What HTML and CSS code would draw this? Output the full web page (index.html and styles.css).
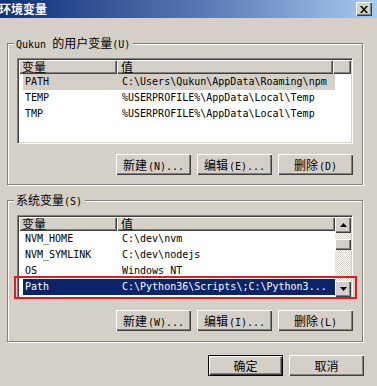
FILE: index.html
```html
<!DOCTYPE html>
<html lang="zh-CN">
<head>
  <meta charset="UTF-8">
  <title>环境变量</title>
  <link rel="stylesheet" href="styles.css">
</head>
<body>
  <div class="window">
    <div class="titlebar">
      <span class="title">环境变量</span>
      <span class="close">
        <svg width="8" height="7" viewBox="0 0 8 7"><path d="M0 0h2l2 2.5 2-2.5h2l-3 3.5 3 3.5h-2l-2-2.5-2 2.5h-2l3-3.5z" fill="#000"/></svg>
      </span>
    </div>

    <div class="content">
      <div class="group">
        <div class="legend"><span class="mono">Qukun </span>的用户变量<span class="mono">(U)</span></div>
        <div class="listview user-list">
          <div class="header">
            <div class="col name">变量</div>
            <div class="col value">值</div>
            <div class="col filler"></div>
          </div>
          <div class="row inactive"><span class="c1 mono">PATH</span><span class="c2 mono">C:\Users\Qukun\AppData\Roaming\npm</span></div>
          <div class="row"><span class="c1 mono">TEMP</span><span class="c2 mono">%USERPROFILE%\AppData\Local\Temp</span></div>
          <div class="row"><span class="c1 mono">TMP</span><span class="c2 mono">%USERPROFILE%\AppData\Local\Temp</span></div>
        </div>
        <div class="buttons">
          <button class="btn">新建<span class="mono">(N)...</span></button>
          <button class="btn">编辑<span class="mono">(E)...</span></button>
          <button class="btn">删除<span class="mono">(D)</span></button>
        </div>
      </div>

      <div class="group system">
        <div class="legend">系统变量<span class="mono">(S)</span></div>
        <div class="listview sys-list">
          <div class="list-main">
            <div class="header">
              <div class="col name">变量</div>
              <div class="col value">值</div>
            </div>
            <div class="row"><span class="c1 mono">NVM_HOME</span><span class="c2 mono">C:\dev\nvm</span></div>
            <div class="row"><span class="c1 mono">NVM_SYMLINK</span><span class="c2 mono">C:\dev\nodejs</span></div>
            <div class="row"><span class="c1 mono">OS</span><span class="c2 mono">Windows NT</span></div>
            <div class="row selected"><span class="c1 mono">Path</span><span class="c2 mono">C:\Python36\Scripts\;C:\Python3...</span></div>
          </div>
          <div class="scrollbar">
            <div class="sb-btn">
              <svg width="7" height="4" viewBox="0 0 7 4"><path d="M3.5 0L7 4H0z" fill="#000"/></svg>
            </div>
            <div class="sb-track">
              <div class="sb-thumb"></div>
            </div>
            <div class="sb-btn">
              <svg width="7" height="4" viewBox="0 0 7 4"><path d="M0 0h7L3.5 4z" fill="#000"/></svg>
            </div>
          </div>
        </div>
        <div class="highlight-box"></div>
        <div class="buttons">
          <button class="btn">新建<span class="mono">(W)...</span></button>
          <button class="btn">编辑<span class="mono">(I)...</span></button>
          <button class="btn">删除<span class="mono">(L)</span></button>
        </div>
      </div>

      <div class="dialog-buttons">
        <button class="btn default">确定</button>
        <button class="btn">取消</button>
      </div>
    </div>
  </div>
</body>
</html>
```

FILE: styles.css
```css
body {
  margin: 0;
  background: #d4d0c8;
  font-family: "Noto Sans CJK SC", sans-serif;
  font-size: 12px;
  color: #000;
  overflow: hidden;
}

.window {
  width: 377px;
  height: 386px;
  background: #d4d0c8;
}

.mono {
  font-family: "DejaVu Sans Mono", "Liberation Mono", monospace;
  font-size: 10px;
}

/* title bar */
.titlebar {
  height: 18px;
  display: flex;
  align-items: center;
  justify-content: space-between;
  background: linear-gradient(to right, #10307a, #5a7ab4 55%, #a6caf0);
  padding-right: 5px;
}

.title {
  color: #fff;
  font-weight: bold;
  font-size: 12px;
  line-height: 18px;
  margin-left: -1px;
}

.close {
  width: 16px;
  height: 14px;
  box-sizing: border-box;
  background: #d4d0c8;
  display: flex;
  align-items: center;
  justify-content: center;
  box-shadow: inset 1px 1px #fff, inset -1px -1px #404040, inset -2px -2px #808080;
}

.content {
  padding: 25px 13px 0 7px;
}

/* group boxes */
.group {
  position: relative;
  width: 356px;
  box-sizing: border-box;
  border: 1px solid #808080;
  box-shadow: inset 1px 1px #fff, 1px 1px #fff;
  padding: 14px 9px 9px 9px;
}

.group.system {
  margin-top: 15px;
  padding-bottom: 10px;
}

.legend {
  position: absolute;
  top: -8px;
  left: 6px;
  padding: 0 3px 0 2px;
  background: #d4d0c8;
  line-height: 14px;
}

/* list views */
.listview {
  background: #fff;
  border: 1px solid;
  border-color: #808080 #fff #fff #808080;
  box-shadow: inset 1px 1px #404040, inset -1px -1px #d4d0c8;
  padding: 1px;
  box-sizing: border-box;
  width: 336px;
}

.user-list {
  height: 86px;
}

.sys-list {
  height: 84px;
  display: flex;
}

.list-main {
  flex: 1;
}

.header {
  display: flex;
  height: 14px;
  background: #d4d0c8;
}

.col {
  box-sizing: border-box;
  height: 14px;
  line-height: 13px;
  padding-left: 3px;
  box-shadow: inset 1px 1px #fff, inset -1px -1px #404040, inset -2px -2px #808080;
}

.col.name {
  width: 98px;
}

.col.value {
  width: 216px;
  padding-left: 4px;
}

.col.filler {
  flex: 1;
}

.sys-list .col.value {
  flex: 1;
}

.row {
  display: flex;
  height: 16px;
  line-height: 16px;
  margin-left: 4px;
  width: 312px;
}

.row.inactive {
  background: #d4d0c8;
}

.row.selected {
  background: #0a246a;
  color: #fff;
}

.c1 {
  width: 95px;
  padding-left: 2px;
  box-sizing: border-box;
}

.c2 {
  padding-left: 4px;
  white-space: nowrap;
}

/* scrollbar */
.scrollbar {
  width: 16px;
  display: flex;
  flex-direction: column;
}

.sb-btn {
  height: 16px;
  background: #d4d0c8;
  box-sizing: border-box;
  display: flex;
  align-items: center;
  justify-content: center;
  box-shadow: inset 1px 1px #fff, inset -1px -1px #404040, inset -2px -2px #808080;
}

.sb-track {
  flex: 1;
  background: repeating-conic-gradient(#fff 0 25%, #d4d0c8 0 50%) 0 0 / 2px 2px;
  padding-top: 6px;
}

.sb-thumb {
  height: 11px;
  background: #d4d0c8;
  box-shadow: inset 1px 1px #fff, inset -1px -1px #404040, inset -2px -2px #808080;
}

.highlight-box {
  position: absolute;
  left: 6px;
  top: 75px;
  width: 343px;
  height: 23px;
  box-sizing: border-box;
  border: 2px solid #e81820;
}

/* buttons */
.buttons {
  display: flex;
  justify-content: flex-end;
  gap: 6px;
  margin-top: 10px;
}

.group.system .buttons {
  margin-top: 11px;
}

.btn {
  width: 75px;
  height: 21px;
  padding: 0;
  border: none;
  background: #d4d0c8;
  font-family: "Noto Sans CJK SC", sans-serif;
  font-size: 12px;
  color: #000;
  line-height: 21px;
  box-shadow: inset 1px 1px #fff, inset -1px -1px #404040, inset -2px -2px #808080;
}

.btn .mono {
  margin-left: 1px;
}

.dialog-buttons {
  display: flex;
  justify-content: flex-end;
  gap: 6px;
  margin-top: 13px;
}

.btn.default {
  box-shadow: inset 0 0 0 1px #000, inset 2px 2px #fff, inset -2px -2px #404040, inset -3px -3px #808080;
}
```
